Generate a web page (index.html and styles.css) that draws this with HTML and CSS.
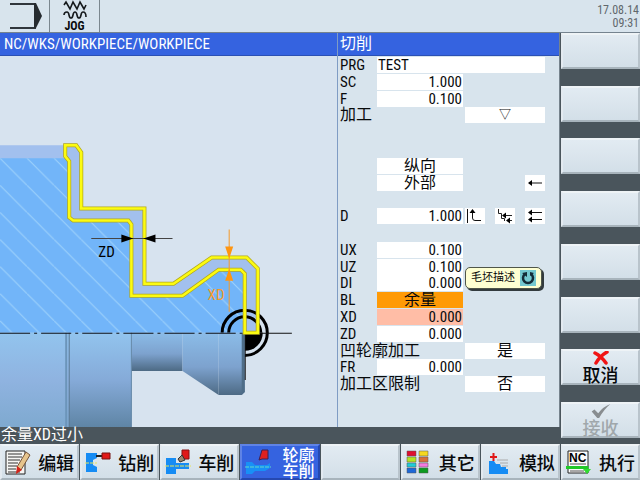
FILE: index.html
```html
<!DOCTYPE html>
<html lang="zh-CN">
<head>
<meta charset="utf-8">
<title>切削</title>
<link rel="stylesheet" href="styles.css">
</head>
<body>
<header class="top">
  <div class="mode">
    <svg width="48" height="32" viewBox="0 0 48 32"><path d="M10 4H35V28H10" fill="none" stroke="#30363c" stroke-width="2"/><path d="M34 3h2l6 13-6 12h-2z" fill="#262b30"/></svg>
  </div>
  <div class="mode jog">
    <svg width="24" height="20" viewBox="0 0 24 20" fill="none" stroke="#15191c" stroke-width="1.6"><path d="M1 5l2-3 4 7 3-7 4 7 3-7 4 7 2-4"/><path d="M1 15q0-3 3-3c3 0 1 6 4 6s1-6 4-6 1 6 4 6 1-6 4-6q3 0 3 5"/></svg>
    <span>JOG</span>
  </div>
  <div class="clock"><div>17.08.14</div><div>09:31</div></div>
</header>

<main class="work">
  <div class="left">
    <div class="panels">
      <section class="screen">
        <h1 class="title path">NC/WKS/WORKPIECE/WORKPIECE</h1>
        <svg class="drawing" viewBox="0 56 336 371" preserveAspectRatio="xMinYMin slice">
          <defs>
            <pattern id="hatch" patternUnits="userSpaceOnUse" x="0" y="158" width="27" height="27"><path d="M-1-1L28 28" stroke="#9fd2fb" stroke-width="1"/></pattern>
            <linearGradient id="g1" x1="0" y1="0" x2="0" y2="1"><stop offset="0" stop-color="#92c4ee"/><stop offset=".5" stop-color="#8fb3e0"/><stop offset="1" stop-color="#7ea9cf"/></linearGradient>
            <linearGradient id="g2" x1="0" y1="0" x2="0" y2="1"><stop offset="0" stop-color="#92c4ee"/><stop offset=".5" stop-color="#85aad8"/><stop offset="1" stop-color="#5e84a4"/></linearGradient>
            <linearGradient id="g3" x1="0" y1="0" x2="0" y2="1"><stop offset="0" stop-color="#8bbce8"/><stop offset=".55" stop-color="#7da2ce"/><stop offset="1" stop-color="#4d6a84"/></linearGradient>
          </defs>
          <path d="M0 145H76L81 152V208H144V283H173L211 257H246L257 268V332H0Z" fill="#a2c0ee"/>
          <path d="M0 158H69V220H131V295H182L218 269H244V332H0Z" fill="#72b5f9"/>
          <path d="M0 158H69V220H131V295H182L218 269H244V332H0Z" fill="url(#hatch)"/>
          <path d="M244 309.500A22.500 22.500 0 0 1 266.500 332 22.500 22.500 0 0 1 244 354.500M221.500 332A22.500 22.500 0 0 1 244 309.500" fill="none" stroke="#000" stroke-width="3"/>
          <path d="M228 332A16 16 0 0 1 260 332" fill="none" stroke="#000" stroke-width="3"/>
          <path d="M244 332H262A18 18 0 0 1 244 350Z"/>
          <path d="M0 332H69V427H0Z" fill="url(#g1)"/>
          <path d="M69 332H131V427H69Z" fill="url(#g2)"/>
          <path d="M131 332H182V370H131Z" fill="url(#g3)"/>
          <path d="M182 332H218V394L182 370Z" fill="url(#g3)"/>
          <path d="M218 332H244V391L241 394H218Z" fill="url(#g3)"/>
          <path d="M66 332V427" stroke="#6c95ba" stroke-width="2"/>
          <path d="M69 332V427" stroke="#54748f"/>
          <path d="M131 332V427" stroke="#6488a8"/>
          <path d="M241 333h3v58l-3 3z" fill="#4e6d88"/>
          <path d="M244.500 332V379" stroke="#111"/>
          <path d="M0 332.500H244" stroke="#10131a" stroke-dasharray="30 4 3 4"/>
          <path d="M244 332.500H291" stroke="#111"/>
          <path d="M65 145H76L81 152V208H144V283H173L211 257H246L257 268V332H244V273L240 269H218L182 295H131V224L128 220H73L69 217V161L65 156Z" fill="none" stroke="#b3a91c" stroke-width="4"/>
          <path d="M65 145H76L81 152V208H144V283H173L211 257H246L257 268V332H244V273L240 269H218L182 295H131V224L128 220H73L69 217V161L65 156Z" fill="none" stroke="#fcfb12" stroke-width="2.500"/>
          <path d="M91 238H172" stroke="#444"/>
          <path d="M121 234l12 4-12 4zM155 234l-12 4 12 4z"/>
          <path d="M228.500 229V311" stroke="#f59a2a"/>
          <path d="M224.500 246h8l-4 12zM224.500 280h8l-4-12z" fill="#ff9510"/>
          <text class="dim" x="98" y="256">ZD</text>
          <text class="dim dim-x" x="207" y="299">XD</text>
        </svg>
      </section>

      <section class="params">
        <h2 class="title">切削</h2>
        <form class="form">
          <div class="row"><label for="prg">PRG</label><input id="prg" class="wide" value="TEST"></div>
          <div class="row"><label for="sc">SC</label><input id="sc" value="1.000"></div>
          <div class="row"><label for="f">F</label><input id="f" value="0.100"></div>
          <div class="row"><label class="zh" for="mach">加工</label><select id="mach" class="second small"><option>▽</option></select></div>
          <div class="row"></div>
          <div class="row"></div>
          <div class="row"><select aria-label="方向"><option>纵向</option></select></div>
          <div class="row"><select aria-label="位置"><option>外部</option></select>
            <div class="picks end"><button type="button" class="pick" aria-label="向左"><svg width="20" height="16" viewBox="0 0 20 16"><path d="M4 8H17" stroke="#111"/><path d="M3 8l4-3v6z"/></svg></button></div></div>
          <div class="row"></div>
          <div class="row"><label for="d">D</label><input id="d" value="1.000">
            <div class="picks">
              <button type="button" class="pick" aria-label="退刀"><svg width="20" height="16" viewBox="0 0 20 16"><path d="M2.500 1V15M7.500 3V10Q7.500 12.500 10 12.500H16" fill="none" stroke="#111"/><path d="M4.500 5l3-4 3 4z"/></svg></button>
              <button type="button" class="pick" aria-label="轮廓"><svg width="20" height="16" viewBox="0 0 20 16"><path d="M3.500 1V5.500H6.500V10.500H9.500V13M8 7.500H17M13 12.500H17" fill="none" stroke="#222"/><path d="M7 7.500l4-3v6zM11 12.500l4-3v6z"/></svg></button>
              <button type="button" class="pick" aria-label="平行"><svg width="20" height="16" viewBox="0 0 20 16"><path d="M4 4.500H17M4 11.500H17" stroke="#111"/><path d="M3 4.500l4-3v6zM3 11.500l4-3v6z"/></svg></button>
            </div></div>
          <div class="row"></div>
          <div class="row"><label for="ux">UX</label><input id="ux" value="0.100"></div>
          <div class="row"><label for="uz">UZ</label><input id="uz" value="0.100"></div>
          <div class="row"><label for="di">DI</label><input id="di" value="0.000">
            <div class="tip" role="tooltip">毛坯描述<svg width="16" height="16" viewBox="0 0 16 16"><path d="M0 0H16V16H0z" fill="#74c8d0"/><path d="M5 4A5 5 0 1 0 11 4" fill="none" stroke="#142c38" stroke-width="2.500"/><path d="M2 3l5-1v5zM14 3l-4-1v4z" fill="#142c38"/></svg></div></div>
          <div class="row"><label for="bl">BL</label><select id="bl" class="active"><option>余量</option></select></div>
          <div class="row"><label for="xd">XD</label><input id="xd" class="error" value="0.000"></div>
          <div class="row"><label for="zd">ZD</label><input id="zd" value="0.000"></div>
          <div class="row"><label class="zh" for="relief">凹轮廓加工</label><select id="relief" class="second"><option>是</option></select></div>
          <div class="row"><label for="fr">FR</label><input id="fr" value="0.000"></div>
          <div class="row"><label class="zh" for="limit">加工区限制</label><select id="limit" class="second"><option>否</option></select></div>
        </form>
      </section>
    </div>
    <div class="status" role="status">余量XD过小</div>
  </div>

  <nav class="side">
    <button class="key" aria-label="1"></button>
    <button class="key" aria-label="2"></button>
    <button class="key" aria-label="3"></button>
    <button class="key" aria-label="4"></button>
    <button class="key" aria-label="5"></button>
    <button class="key" aria-label="6"></button>
    <button class="key stack"><svg width="16" height="14" viewBox="0 0 16 14"><path d="M2 2q6 3 11 10M14 1Q7 5 3 12" fill="none" stroke="#f01414" stroke-width="3.500" stroke-linecap="round"/></svg><span>取消</span></button>
    <button class="key stack" disabled><svg width="20" height="14" viewBox="0 0 20 15"><path d="M0 8l3-2 4 4Q12 3 20 0 13 6 8 15H6z" fill="#888d90"/></svg><span>接收</span></button>
  </nav>
</main>

<nav class="bar">
  <button class="key"><svg width="26" height="26" viewBox="0 0 26 26"><path d="M1 2H20V25H1z" fill="#f6f6f4" stroke="#222"/><path d="M3 5H17M3 8H17M3 11H15M3 14H13M3 17H12M3 20H11M3 23H15" stroke="#333"/><path d="M21 3l4 3-9 15-4-3z" fill="#e6c48c" stroke="#75543a"/><path d="M12 17l5 4-6 4z" fill="#d42218"/></svg><span>编辑</span></button>
  <button class="key"><svg width="26" height="26" viewBox="0 0 26 26"><path d="M1 4H12V9L8 11V16L12 18V23H1z" fill="#168cf4"/><path d="M0 14H12" stroke="#e8e65a" stroke-dasharray="4 1"/><path d="M11 7H18" stroke="#222" stroke-width="2"/><path d="M17 4h8v6h-8z" fill="#e01818" stroke="#711"/></svg><span>钻削</span></button>
  <button class="key"><svg width="26" height="26" viewBox="0 0 26 26"><path d="M1 9H11V14H24V20H11V25H1z" fill="#168cf4"/><path d="M0 17H26" stroke="#e8e65a" stroke-dasharray="4 1"/><path d="M17 1h7v9h-7z" fill="#e01818" stroke="#811"/><path d="M17 6l-4 4 2 3 5-2z" fill="#99846e" stroke="#333"/></svg><span>车削</span></button>
  <button class="key on"><svg width="26" height="26" viewBox="0 0 26 26"><path d="M1 13H7L10 16H22L25 14V19L20 22H10L7 25H1z" fill="#1890f6"/><path d="M0 18H26" stroke="#61d8c8" stroke-dasharray="4 1"/><path d="M17 1h6v9h-6l-3 1z" fill="#e02020" stroke="#402050"/></svg><span class="two">轮廓<br>车削</span></button>
  <button class="key" aria-label="5"></button>
  <button class="key"><svg width="24" height="26" viewBox="0 0 24 26" stroke="#555" stroke-width=".5"><path d="M1 2h9v5H1z" fill="#e01030"/><path d="M13 2h9v5h-9z" fill="#f5d820"/><path d="M1 8h9v5H1z" fill="#b4e422"/><path d="M13 8h9v5h-9z" fill="#d8703a"/><path d="M1 14h9v4H1z" fill="#20cbd8"/><path d="M13 14h9v4h-9z" fill="#f47ae0"/><path d="M1 19h9v5H1z" fill="#1d68d8"/><path d="M13 19h9v5h-9z" fill="#0c9b20"/></svg><span>其它</span></button>
  <button class="key"><svg width="26" height="26" viewBox="0 0 26 26"><path d="M3 12H8L10 15H14L15 18H20V20H22V25H3z" fill="#168cf4"/><path d="M11 11H22M14 14H22M16 17H22" stroke="#aaa"/><path d="M4 8H11M7.500 4V12" stroke="#e01818" stroke-width="2"/></svg><span>模拟</span></button>
  <button class="key"><svg width="26" height="26" viewBox="0 0 26 26"><path d="M2 2H22V24H2z" fill="#fbfbfb" stroke="#222"/><text class="nc" x="3" y="13">NC</text><path d="M4 15H20M4 22H18" stroke="#555"/><path d="M0 18.500H21V22" fill="none" stroke="#20c828" stroke-width="3"/><path d="M17 20h8l-4 5z" fill="#30dc30"/></svg><span>执行</span></button>
</nav>
</body>
</html>
```
FILE: styles.css
```css
* { box-sizing: border-box; }

body {
  margin: 0;
  min-height: 100vh;
  display: flex;
  flex-direction: column;
  background: #4a555c;
  color: #080a0c;
  font: 16px/16px "Liberation Sans Narrow", "Roboto Condensed", "Noto Sans CJK SC", sans-serif;
}

input, select, button {
  font: inherit;
  color: inherit;
  border: 0;
  border-radius: 0;
  margin: 0;
  padding: 0;
  appearance: none;
}

svg { flex: none; }

.top {
  display: flex;
  height: 33px;
  background: #d8e4ed;
  border-bottom: 1px solid #75838f;
}

.mode {
  width: 50px;
  border-right: 1px solid #7b878f;
}

.jog {
  display: flex;
  flex-direction: column;
  align-items: center;
  font-size: 12px;
  line-height: 12px;
  font-weight: bold;
}

.clock {
  margin-left: auto;
  padding: 4px 1px 0 0;
  text-align: right;
  font-size: 12px;
  line-height: 13px;
  color: #60676c;
}

.work {
  flex: 1;
  display: grid;
  grid-template-columns: 1fr 80px;
}

.left, .screen, .params {
  display: flex;
  flex-direction: column;
  min-width: 0;
}

.panels {
  flex: 1;
  display: grid;
  grid-template-columns: 1fr 223px;
}

.screen { background: #d7e3ef; }

.title {
  margin: 0;
  height: 23px;
  padding-left: 4px;
  font-size: 16px;
  line-height: 22px;
  font-weight: normal;
  color: #fff;
  background: #3563e0;
  border-bottom: 1px solid #2b50b4;
}

.path { font-size: 15px; }

.drawing {
  flex: 1 1 0;
  width: 100%;
  height: 0;
  min-height: 0;
}

.dim { font-size: 15px; }

.dim-x { fill: #f59a2a; }

.params {
  background: #d8e4ed;
  border-left: 1px solid #7f9cc4;
  border-right: 1px solid #76838d;
}

.params .title { padding-left: 2px; }

.form {
  flex: 1;
  display: grid;
  grid-template-rows: repeat(20, minmax(16px, 1fr));
  padding: 1px 11px 34px 2px;
}

.row {
  position: relative;
  display: grid;
  grid-template-columns: 37px 86px 82px;
  grid-template-rows: 16px;
  font-size: 15px;
}

.row label {
  grid-column: 1;
  grid-row: 1;
  white-space: nowrap;
}

.row .zh, .row select { font-size: 16px; }

.row input, .row select {
  grid-column: 2;
  grid-row: 1;
  width: 100%;
  height: 16px;
  min-width: 0;
  background: #fff;
  text-align: right;
}

.row input { padding: 0 1px; }

.row select {
  text-align: center;
  text-align-last: center;
}

.row .wide {
  grid-column: 2 / 4;
  text-align: left;
}

.row .second {
  grid-column: 3;
  justify-self: end;
  width: 80px;
}

.row .small { font-size: 12px; }

.row .active { background: #ff9a06; }

.row .error { background: #ffbda6; }

.picks {
  grid-column: 3;
  grid-row: 1;
  display: flex;
  justify-content: space-between;
  padding-left: 2px;
}

.row .end { justify-content: flex-end; }

.pick {
  width: 20px;
  height: 16px;
  background: #fff;
}

.pick svg { display: block; }

.tip {
  position: absolute;
  top: -8px;
  left: 125px;
  display: flex;
  align-items: center;
  gap: 5px;
  height: 22px;
  padding: 0 5px;
  border: 1px solid #50564a;
  border-radius: 5px;
  background: #feffd2;
  box-shadow: 2px 2px 0 #333b3e;
  font-size: 11px;
  white-space: nowrap;
}

.status {
  height: 17px;
  padding-left: 1px;
  color: #fff;
}

.side {
  display: flex;
  flex-direction: column;
  justify-content: space-between;
  padding: 0 0 6px 1px;
}

.key {
  display: flex;
  align-items: center;
  justify-content: space-between;
  height: 36px;
  padding: 0 4px;
  background: linear-gradient(#e2ebf2, #d3dfe8);
  border: 2px solid;
  border-color: #eef3f6 #b9c4cc #a8b4bc #e3eaf0;
  font-family: "Noto Sans CJK SC", sans-serif;
  font-weight: 500;
  font-size: 18px;
  line-height: 18px;
}

.stack {
  flex-direction: column;
  justify-content: flex-start;
}

.key:disabled { color: #a0a7ab; }

.bar {
  display: grid;
  grid-template-columns: repeat(8, 1fr);
  column-gap: 1px;
}

.bar .key { padding: 0 3px; }

.bar .on {
  color: #fff;
  background: #3563e0;
  border-color: #5f83e6 #2548b0 #2548b0 #5f83e6;
}

.two {
  font-size: 16px;
  line-height: 16px;
}

.nc {
  font: bold 12px "Liberation Sans", sans-serif;
}
```
